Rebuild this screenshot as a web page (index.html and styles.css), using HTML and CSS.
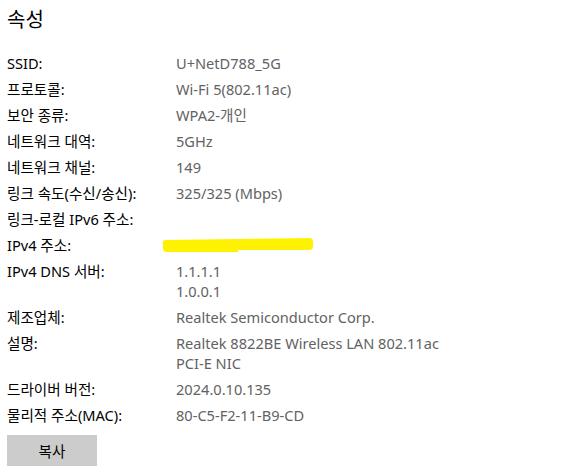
FILE: index.html
```html
<!DOCTYPE html>
<html lang="ko">
<head>
<meta charset="utf-8">
<link rel="stylesheet" href="styles.css">
</head>
<body>
<div class="page">
  <h1 class="title">속성</h1>
  <div class="props">
    <div class="label">SSID:</div><div class="value">U+NetD788_5G</div>
    <div class="label">프로토콜:</div><div class="value">Wi-Fi 5(802.11ac)</div>
    <div class="label">보안 종류:</div><div class="value">WPA2-개인</div>
    <div class="label">네트워크 대역:</div><div class="value">5GHz</div>
    <div class="label">네트워크 채널:</div><div class="value">149</div>
    <div class="label">링크 속도(수신/송신):</div><div class="value">325/325 (Mbps)</div>
    <div class="label">링크-로컬 IPv6 주소:</div><div class="value"></div>
    <div class="label">IPv4 주소:</div><div class="value redacted"><svg class="mark" width="150" height="18" viewBox="0 0 150 18"><path d="M2 5 L146 3 Q150 3 150 7 L150 11 Q150 15 146 15 L75 15 L75 17 L4 17 Q0 17 0 13 L0 8 Q0 5 2 5 Z" fill="#fff200"/></svg></div>
    <div class="label">IPv4 DNS 서버:</div><div class="value">1.1.1.1<br>1.0.0.1</div>
    <div class="label">제조업체:</div><div class="value">Realtek Semiconductor Corp.</div>
    <div class="label">설명:</div><div class="value">Realtek 8822BE Wireless LAN 802.11ac<br>PCI-E NIC</div>
    <div class="label">드라이버 버전:</div><div class="value">2024.0.10.135</div>
    <div class="label">물리적 주소(MAC):</div><div class="value">80-C5-F2-11-B9-CD</div>
  </div>
  <button class="copy">복사</button>
</div>
</body>
</html>
```
FILE: styles.css
```css
html, body {
  margin: 0;
  padding: 0;
  background: #ffffff;
}
body {
  font-family: "Noto Sans", "Noto Sans CJK KR", sans-serif;
  font-size: 14.6px;
  color: #000;
}
.page {
  padding: 6px 0 0 7px;
}
.title {
  margin: 0;
  font-size: 20px;
  font-weight: 400;
  line-height: 28px;
}
.props {
  display: grid;
  grid-template-columns: 169px auto;
  row-gap: 6px;
  margin-top: 19px;
  line-height: 20px;
}
.label {
  color: #000;
}
.value {
  color: #626262;
}
.redacted {
  height: 20px;
  position: relative;
}
.mark {
  position: absolute;
  left: -13px;
  top: 0px;
}
.copy {
  margin-top: 10px;
  width: 90px;
  height: 31px;
  border: none;
  background: #cccccc;
  font-family: "Noto Sans", "Noto Sans CJK KR", sans-serif;
  font-size: 14.6px;
  color: #000;
  padding: 0;
}
```
